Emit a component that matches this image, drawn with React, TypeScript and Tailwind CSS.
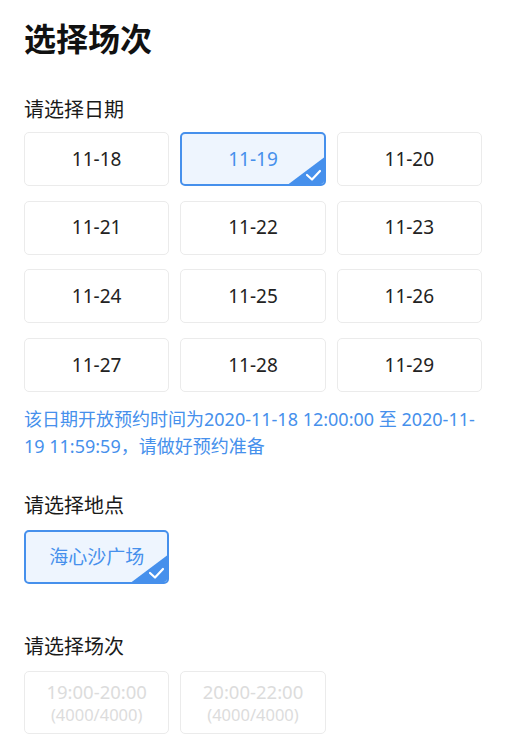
import { useState } from "react";

const dates = [
  "11-18", "11-19", "11-20",
  "11-21", "11-22", "11-23",
  "11-24", "11-25", "11-26",
  "11-27", "11-28", "11-29",
];

const sessions = [
  { time: "19:00-20:00", quota: "(4000/4000)" },
  { time: "20:00-22:00", quota: "(4000/4000)" },
];

const CornerCheck = () => (
  <svg
    className="absolute -right-[2px] -bottom-[2px]"
    width="40"
    height="30"
    viewBox="0 0 40 30"
  >
    <path d="M0 30 L40 0 L40 26 Q40 30 36 30 Z" fill="#4690ec" />
    <path
      d="M21 19 L26 23.5 L34 15"
      fill="none"
      stroke="#fff"
      strokeWidth="2.2"
      strokeLinecap="round"
      strokeLinejoin="round"
    />
  </svg>
);

const Option = ({
  label,
  active,
  onClick,
}: {
  label: string;
  active: boolean;
  onClick: () => void;
}) => (
  <button
    onClick={onClick}
    className={`relative h-[54px] rounded-[5px] flex items-center justify-center text-[19px] overflow-hidden
      ${active
        ? "border-[2.5px] border-[#4690ec] bg-[#eef5fe] text-[#4690ec]"
        : "border border-[#ebebeb] bg-white text-[#222]"
      }`}
  >
    {label}
    {active && <CornerCheck />}
  </button>
);

export default function App() {
  const [date, setDate] = useState("11-19");
  const [place, setPlace] = useState("海心沙广场");

  return (
    <div
      className="w-[514px] min-h-[753px] bg-white pl-6 pr-8 pt-[19px]"
      style={{ fontFamily: '"Noto Sans", "Noto Sans CJK SC", sans-serif' }}
    >
      <h1 className="text-[32px] leading-[40px] font-bold text-[#111]">选择场次</h1>

      {/* Date */}
      <div className="mt-[37px] mb-2 text-[20px] leading-[28px] text-[#1a1a1a]">请选择日期</div>
      <div className="grid grid-cols-3 gap-x-[11px] gap-y-[14.7px]">
        {dates.map((d) => (
          <Option key={d} label={d} active={date === d} onClick={() => setDate(d)} />
        ))}
      </div>
      <p className="mt-[14px] text-[18px] leading-[27px] text-[#4690ec]">
        该日期开放预约时间为2020-11-18 12:00:00 至 2020-11-19 11:59:59，请做好预约准备
      </p>

      {/* Place */}
      <div className="mt-[32px] mb-[10px] text-[20px] leading-[28px] text-[#1a1a1a]">请选择地点</div>
      <div className="grid grid-cols-3 gap-x-[11px]">
        <Option label="海心沙广场" active={place === "海心沙广场"} onClick={() => setPlace("海心沙广场")} />
      </div>

      {/* Session */}
      <div className="mt-[49px] mb-[10px] text-[20px] leading-[28px] text-[#1a1a1a]">请选择场次</div>
      <div className="grid grid-cols-3 gap-x-[11px]">
        {sessions.map((s) => (
          <button
            key={s.time}
            disabled
            className="h-[63px] rounded-[5px] border border-[#ebebeb] bg-white flex flex-col items-center justify-center text-[#dcdcdc]"
          >
            <span className="text-[18.5px] leading-[23px]">{s.time}</span>
            <span className="text-[16.5px] leading-[23px]">{s.quota}</span>
          </button>
        ))}
      </div>
    </div>
  );
}
